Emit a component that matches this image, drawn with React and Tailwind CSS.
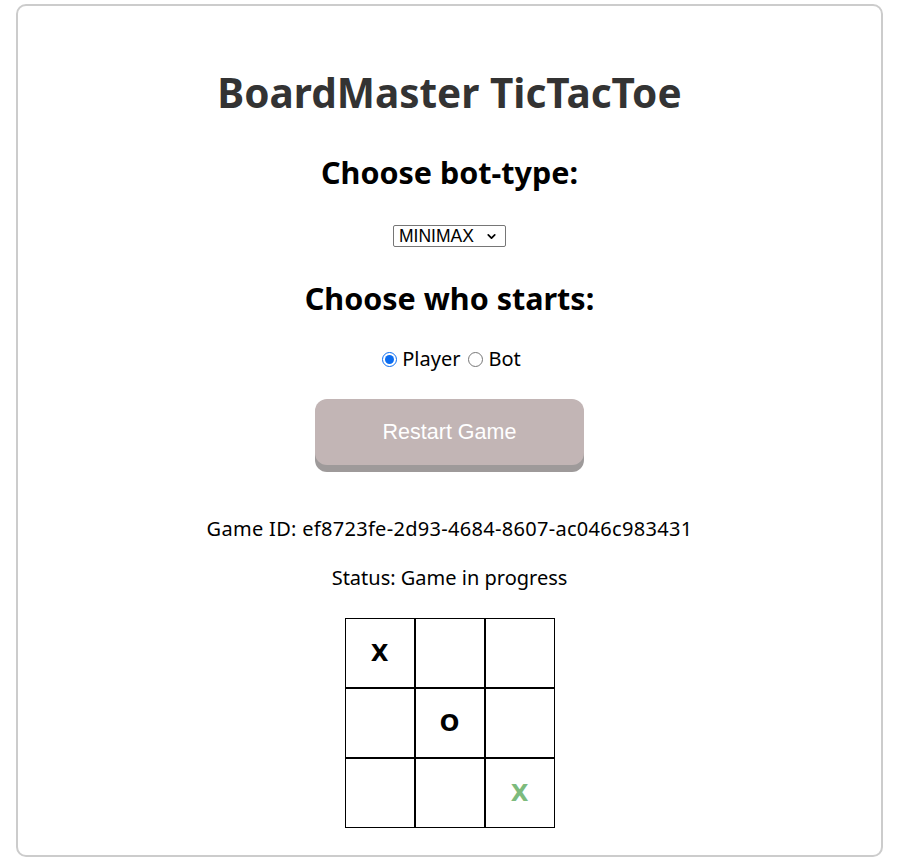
import { useState } from 'react';
import { ChevronDown } from 'lucide-react';

const font = { fontFamily: '"Noto Sans", "Open Sans", sans-serif' };
const arial = { fontFamily: '"Liberation Sans", Arial, sans-serif' };

export default function App() {
  const [starter, setStarter] = useState('player');
  const board = ['X', '', '', '', 'O', '', '', '', 'X'];

  return (
    <div className="bg-white min-h-[867px] pt-[4px]" style={font}>
      <div className="ml-[16px] w-[867px] border-2 border-[#cccccc] rounded-[10px] flex flex-col items-center pt-[63px] pb-[27px]">
        <h1 className="text-[40.5px] leading-[48px] font-bold text-[#333333]">BoardMaster TicTacToe</h1>
        <h2 className="mt-[37px] text-[30.5px] leading-[36px] font-bold text-black">Choose bot-type:</h2>
        <div className="mt-[35px] relative inline-flex">
          <select
            defaultValue="MINIMAX"
            className="appearance-none h-[22px] w-[113px] border border-[#767676] rounded-[2px] text-[17.5px] leading-[20px] pl-[5px] pr-[22px] text-black bg-white"
            style={arial}
          >
            <option>MINIMAX</option>
            <option>RANDOM</option>
          </select>
          <ChevronDown className="absolute right-[8px] top-[5px] w-[13px] h-[13px] text-black pointer-events-none" strokeWidth={3.2} />
        </div>
        <h2 className="mt-[33px] text-[30.5px] leading-[36px] font-bold text-black">Choose who starts:</h2>
        <div className="mt-[29px] flex items-center text-[20px] leading-[28px] text-black">
          <input
            type="radio"
            name="starter"
            checked={starter === 'player'}
            onChange={() => setStarter('player')}
            className="w-[15px] h-[15px] ml-[4px] mr-[5px] accent-[#0b6cf0]"
          />
          <span>Player</span>
          <input
            type="radio"
            name="starter"
            checked={starter === 'bot'}
            onChange={() => setStarter('bot')}
            className="w-[15px] h-[15px] ml-[8px] mr-[5px]"
          />
          <span>Bot</span>
        </div>
        <button
          className="mt-[26px] w-[269px] h-[66px] rounded-[12px] bg-[#c2b5b5] text-white text-[21.5px] leading-[26px] shadow-[0_7px_0_#9e9a9a]"
          style={arial}
        >
          Restart Game
        </button>
        <p className="mt-[50px] text-[20px] leading-[28px] tracking-[0.3px] text-black">Game ID: ef8723fe-2d93-4684-8607-ac046c983431</p>
        <p className="mt-[21px] text-[20px] leading-[28px] text-black">Status: Game in progress</p>
        <div className="mt-[26px] grid grid-cols-[70px_70px_70px]">
          {board.map((v, i) => (
            <div key={i} className="w-[70px] h-[70px] border border-black flex items-center justify-center">
              <span
                className={`text-[23px] font-bold ${i === 8 ? 'text-[#7dbb7d]' : 'text-black'}`}
                style={{ fontFamily: '"DejaVu Sans", Verdana, sans-serif' }}
              >
                {v}
              </span>
            </div>
          ))}
        </div>
      </div>
    </div>
  );
}
